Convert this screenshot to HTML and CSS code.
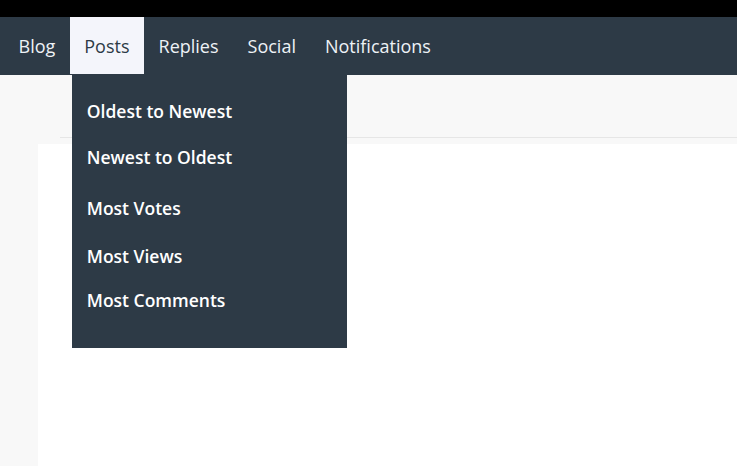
FILE: index.html
```html
<!DOCTYPE html>
<html>
<head>
<meta charset="utf-8">
<link rel="stylesheet" href="styles.css">
</head>
<body>
<div class="topbar"></div>
<nav class="nav">
  <a class="nav-item">Blog</a>
  <div class="nav-item active">Posts
    <ul class="dropdown">
      <li>Oldest to Newest</li>
      <li>Newest to Oldest</li>
      <li class="gap-lg">Most Votes</li>
      <li class="gap-sm">Most Views</li>
      <li class="gap-neg">Most Comments</li>
    </ul>
  </div>
  <a class="nav-item">Replies</a>
  <a class="nav-item">Social</a>
  <a class="nav-item">Notifications</a>
</nav>
<div class="subheader"></div>
<main class="content"></main>
</body>
</html>
```

FILE: styles.css
```css
html, body { margin: 0; padding: 0; }
body {
  background: #f8f8f8;
  height: 466px;
  overflow: hidden;
  display: flex;
  flex-direction: column;
}
.topbar { height: 17px; background: #000; }
.nav {
  height: 58px;
  background: #2d3a46;
  display: flex;
  padding-left: 4px;
  font-family: "Open Sans", sans-serif;
  font-size: 18px;
}
.nav-item {
  position: relative;
  display: flex;
  align-items: center;
  padding: 0 14.5px;
  color: #eef2f6;
}
.nav-item.active {
  background: #f4f5fb;
  color: #2d3a46;
  height: 57px;
}
.dropdown {
  position: absolute;
  top: 57px;
  left: 2px;
  width: 245px;
  margin: 0;
  padding: 14px 15px 25px;
  list-style: none;
  background: #2d3a46;
  font-family: "Open Sans", sans-serif;
  font-weight: 600;
  font-size: 17.5px;
  color: #fff;
}
.dropdown li {
  height: 46px;
  display: flex;
  align-items: center;
  white-space: nowrap;
}
.dropdown li.gap-lg { margin-top: 5px; }
.dropdown li.gap-sm { margin-top: 2px; }
.dropdown li.gap-neg { margin-top: -2px; }
.subheader {
  height: 62px;
  margin-left: 60px;
  border-bottom: 1px solid #e6e6e6;
}
.content {
  margin-top: 6px;
  margin-left: 38px;
  flex: 1;
  background: #fff;
}
```
